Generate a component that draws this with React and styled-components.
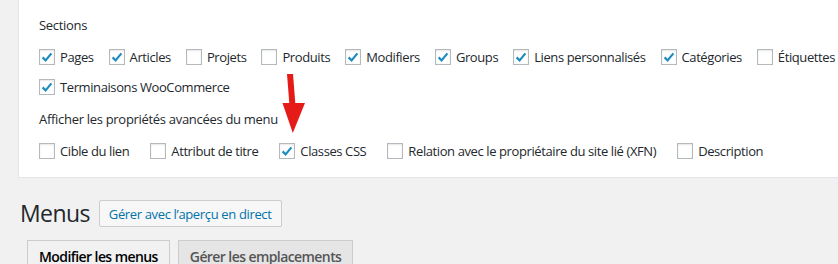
import { createGlobalStyle } from "styled-components";
import styled from "styled-components";

const sections = [
  { label: "Pages", checked: true },
  { label: "Articles", checked: true },
  { label: "Projets", checked: false },
  { label: "Produits", checked: false },
  { label: "Modifiers", checked: true },
  { label: "Groups", checked: true },
  { label: "Liens personnalisés", checked: true },
  { label: "Catégories", checked: true },
  { label: "Étiquettes", checked: false },
  { label: "Terminaisons WooCommerce", checked: true },
];

const advanced = [
  { label: "Cible du lien", checked: false },
  { label: "Attribut de titre", checked: false },
  { label: "Classes CSS", checked: true },
  { label: "Relation avec le propriétaire du site lié (XFN)", checked: false },
  { label: "Description", checked: false },
];

const Check = ({ label, checked }) => (
  <Option>
    <Box>
      {checked && (
        <svg width="14" height="14" viewBox="0 0 14 14">
          <path d="M2.6 7.4 L5.6 10.4 L11.4 3.4" fill="none" stroke="#1e8cbe" strokeWidth="2.2" />
        </svg>
      )}
    </Box>
    {label}
  </Option>
);

const App = () => {
  return (
    <>
      <GlobalStyle />
      <Page>
        <Panel>
          <Title>Sections</Title>
          <List gap={15}>
            {sections.map((item) => (
              <Check key={item.label} {...item} />
            ))}
          </List>
          <Title>Afficher les propriétés avancées du menu</Title>
          <List gap={21}>
            {advanced.map((item) => (
              <Check key={item.label} {...item} />
            ))}
          </List>
          <Arrow width="26" height="64" viewBox="0 0 26 64">
            <polygon points="7,4 13,4 15.5,36 9.5,36" fill="#e41b17" />
            <polygon points="2.5,33 25,33 12.8,63" fill="#e41b17" />
          </Arrow>
        </Panel>
        <Header>
          <Heading>Menus</Heading>
          <Button>Gérer avec l’aperçu en direct</Button>
        </Header>
        <Tabs>
          <Tab $active>Modifier les menus</Tab>
          <Tab>Gérer les emplacements</Tab>
        </Tabs>
      </Page>
    </>
  );
};

const GlobalStyle = createGlobalStyle`
  body {
    margin: 0;
    background: #f1f1f1;
    font-family: "Open Sans", "Noto Sans", sans-serif;
    color: #23282d;
    overflow: hidden;
  }
`;

const Page = styled.div`
  padding-left: 18px;
  width: 900px;
`;

const Panel = styled.section`
  position: relative;
  background: #fff;
  border-left: 1px solid #e5e5e5;
  border-bottom: 1px solid #e2e4e7;
  padding: 16px 0 11px 20px;
  width: 860px;
`;

const Title = styled.h3`
  margin: 0 0 8px;
  font-size: 13px;
  font-weight: 400;
  line-height: 18px;
  letter-spacing: -0.3px;
  div + & {
    margin-top: 8px;
  }
`;

const List = styled.div`
  display: flex;
  flex-wrap: wrap;
  column-gap: ${(p) => p.gap}px;
`;

const Option = styled.label`
  display: flex;
  align-items: center;
  gap: 5px;
  height: 30px;
  font-size: 13px;
  letter-spacing: -0.4px;
  white-space: nowrap;
`;

const Box = styled.span`
  box-sizing: border-box;
  width: 16px;
  height: 16px;
  border: 1px solid #b4b9be;
  background: #fff;
  box-shadow: inset 0 1px 2px rgba(0, 0, 0, 0.1);
  display: flex;
  align-items: center;
  justify-content: center;
`;

const Arrow = styled.svg`
  position: absolute;
  left: 261px;
  top: 70px;
`;

const Header = styled.div`
  display: flex;
  align-items: center;
  gap: 9px;
  margin: 21px 0 0 2px;
`;

const Heading = styled.h1`
  margin: 0;
  font-size: 23px;
  font-weight: 400;
  line-height: 29px;
  letter-spacing: -0.6px;
`;

const Button = styled.button`
  box-sizing: border-box;
  height: 27px;
  padding: 0 9px;
  border: 1px solid #ccc;
  border-radius: 2px;
  background: #f7f7f7;
  color: #0073aa;
  font-family: inherit;
  font-size: 13px;
  letter-spacing: -0.35px;
`;

const Tabs = styled.nav`
  display: flex;
  gap: 8px;
  margin: 12px 0 0 9px;
`;

const Tab = styled.div`
  padding: 0 11px;
  height: 32px;
  line-height: 32px;
  border: 1px solid #ccc;
  border-bottom: none;
  background: ${(p) => (p.$active ? "#f1f1f1" : "#e5e5e5")};
  color: ${(p) => (p.$active ? "#000" : "#555")};
  font-size: 14px;
  font-weight: 600;
  letter-spacing: -0.58px;
`;

export default App;
